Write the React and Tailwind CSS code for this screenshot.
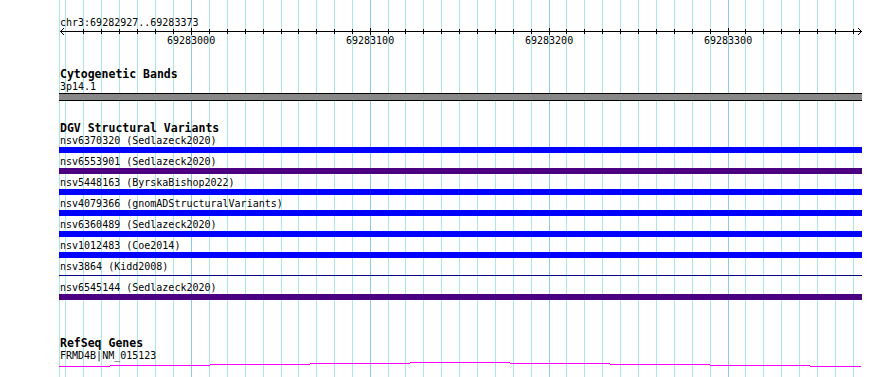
import React from "react";

const GRID = [65, 83, 101, 119, 137, 155, 173, 191, 209, 227, 245, 263, 281, 298, 316, 334, 352, 370, 388, 405, 423, 441, 459, 477, 495, 513, 531, 549, 566, 584, 602, 620, 638, 656, 674, 692, 710, 728, 745, 763, 781, 799, 817, 835, 853];
const MAJOR = [191, 370, 549, 728];

const ROWS = [
  ["nsv6370320 (Sedlazeck2020)", "blue"],
  ["nsv6553901 (Sedlazeck2020)", "purple"],
  ["nsv5448163 (ByrskaBishop2022)", "blue"],
  ["nsv4079366 (gnomADStructuralVariants)", "blue"],
  ["nsv6360489 (Sedlazeck2020)", "blue"],
  ["nsv1012483 (Coe2014)", "blue"],
  ["nsv3864 (Kidd2008)", "line"],
  ["nsv6545144 (Sedlazeck2020)", "purple"],
];

const GENE = [
  [0, 51, 4],
  [51, 151, 3],
  [151, 251, 2],
  [251, 351, 1],
  [351, 451, 0],
  [451, 551, 1],
  [551, 651, 2],
  [651, 751, 3],
  [751, 802, 4],
];

function Bar({ kind }) {
  if (kind === "blue") return <div className="h-[6px] w-[803px] bg-[#0000ff]" />;
  if (kind === "purple") return <div className="h-[6px] w-[803px] bg-[#4b0082]" />;
  return (
    <div className="h-[6px] w-[803px] pt-[2px]">
      <div className="h-[1px] w-[803px] bg-[#000080]" />
    </div>
  );
}

function Axis() {
  const arrows = [];
  for (let i = 0; i < 4; i++) {
    arrows.push(<rect key={"l" + i} x={1 + i} y={3 - i} width={1} height={1} />);
    arrows.push(<rect key={"l2" + i} x={1 + i} y={3 + i} width={1} height={1} />);
    arrows.push(<rect key={"r" + i} x={802 - i} y={3 - i} width={1} height={1} />);
    arrows.push(<rect key={"r2" + i} x={802 - i} y={3 + i} width={1} height={1} />);
  }
  return (
    <svg width="803" height="7" className="-mt-[1px] block" shapeRendering="crispEdges" fill="#000">
      <rect x={1} y={3} width={801} height={1} />
      {GRID.filter((x) => x !== 65).map((x) =>
        MAJOR.includes(x) ? (
          <rect key={x} x={x - 59} y={0} width={1} height={7} />
        ) : (
          <rect key={x} x={x - 59} y={1} width={1} height={5} />
        )
      )}
      {arrows}
    </svg>
  );
}

export default function App() {
  return (
    <div className="relative w-[890px] h-[377px] overflow-hidden bg-white text-black font-['DejaVu_Sans_Mono',monospace]">
      <svg width="890" height="377" className="absolute left-0 top-0" shapeRendering="crispEdges">
        <rect x={59} y={0} width={1} height={377} fill="#aae8e8" />
        {GRID.map((x) => (
          <rect key={x} x={x} y={0} width={1} height={377} fill={MAJOR.includes(x) ? "#8ccbe8" : "#aae8e8"} />
        ))}
      </svg>

      <div className="relative pl-[59px] pt-[17px] flex flex-col">
        <div className="h-[12px] leading-[12px] text-[10px] pl-[1px] whitespace-nowrap">chr3:69282927..69283373</div>
        <Axis />
        <div className="relative h-[12px] w-[803px] text-[10px] leading-[12px]">
          <span className="absolute top-0 left-[108px]">69283000</span>
          <span className="absolute top-0 left-[287px]">69283100</span>
          <span className="absolute top-0 left-[466px]">69283200</span>
          <span className="absolute top-0 left-[645px]">69283300</span>
        </div>

        <div className="mt-[21px] h-[13px] leading-[13px] text-[11.5px] font-bold pl-[1px] whitespace-nowrap">Cytogenetic Bands</div>
        <div className="h-[12px] leading-[12px] text-[10px] pl-[1px]">3p14.1</div>
        <div className="h-[8px] w-[803px] border-y border-black bg-[#888888]" />

        <div className="mt-[21px] h-[13px] leading-[13px] text-[11.5px] font-bold pl-[1px] whitespace-nowrap">DGV Structural Variants</div>
        <div className="flex flex-col gap-[3px]">
          {ROWS.map(([label, kind]) => (
            <div key={label} className="flex flex-col">
              <div className="h-[12px] leading-[12px] text-[10px] pl-[1px] whitespace-pre">{label}</div>
              <Bar kind={kind} />
            </div>
          ))}
        </div>

        <div className="mt-[37px] h-[13px] leading-[13px] text-[11.5px] font-bold pl-[1px] whitespace-nowrap">RefSeq Genes</div>
        <div className="h-[12px] leading-[12px] text-[10px] pl-[1px]">FRMD4B|NM_015123</div>
        <svg width="803" height="6" className="block" shapeRendering="crispEdges" fill="#ff00ff">
          {GENE.map(([a, b, y]) => (
            <rect key={a} x={a} y={y} width={b - a} height={1} />
          ))}
        </svg>
      </div>
    </div>
  );
}
